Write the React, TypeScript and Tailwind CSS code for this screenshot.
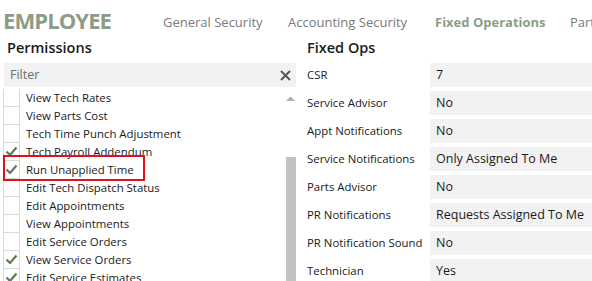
import React from "react";

const perms: { label: string; checked: boolean }[] = [
  { label: "View Tech Rates", checked: false },
  { label: "View Parts Cost", checked: false },
  { label: "Tech Time Punch Adjustment", checked: false },
  { label: "Tech Payroll Addendum", checked: true },
  { label: "Run Unapplied Time", checked: true },
  { label: "Edit Tech Dispatch Status", checked: false },
  { label: "Edit Appointments", checked: false },
  { label: "View Appointments", checked: false },
  { label: "Edit Service Orders", checked: false },
  { label: "View Service Orders", checked: true },
  { label: "Edit Service Estimates", checked: true },
];

const fixedOps: [string, string][] = [
  ["CSR", "7"],
  ["Service Advisor", "No"],
  ["Appt Notifications", "No"],
  ["Service Notifications", "Only Assigned To Me"],
  ["Parts Advisor", "No"],
  ["PR Notifications", "Requests Assigned To Me"],
  ["PR Notification Sound", "No"],
  ["Technician", "Yes"],
];

function Check() {
  return (
    <svg width="13" height="11" viewBox="0 0 13 11">
      <path d="M1.5 5.5 L5 9 L11.5 1.5" fill="none" stroke="#5d7a57" strokeWidth="2.2" />
    </svg>
  );
}

export default function App() {
  return (
    <div
      className="w-[592px] h-[281px] overflow-hidden bg-white text-[#1a1a1a]"
      style={{ fontFamily: "'Open Sans', 'Noto Sans', sans-serif" }}
    >
      {/* header tabs */}
      <div className="flex items-end h-[34px] pl-[3px] whitespace-nowrap">
        <div className="text-[22px] font-bold leading-none text-[#8c9c86] tracking-[-0.9px] pb-[3px]">EMPLOYEE</div>
        <div className="flex gap-[24px] ml-[52px] text-[13px] text-[#7a7a7a] pb-[2px]">
          <span className="w-[101px]">General Security</span>
          <span className="w-[123px]">Accounting Security</span>
          <span className="w-[111px] font-bold text-[#8c9c86]">Fixed Operations</span>
          <span>Parts</span>
        </div>
      </div>

      <div className="flex">
        {/* permissions */}
        <div className="w-[296px] shrink-0 pl-[4px]">
          <div className="h-[29px] pl-[3px] pt-[4px] text-[14.5px] font-semibold leading-[20px]">Permissions</div>
          <div className="flex items-center justify-between h-[24px] bg-[#f2f2f2] pl-[6px] pr-[5px] text-[12.5px] text-[#6e6e6e]">
            <span>Filter</span>
            <svg width="11" height="11" viewBox="0 0 11 11">
              <path d="M1 1 L10 10 M10 1 L1 10" stroke="#555" strokeWidth="2" />
            </svg>
          </div>
          <div className="relative flex h-[200px] mt-[1px] -ml-[1px]">
            <div className="flex-1 pt-[1px]">
              {perms.map((p) => (
                <div key={p.label} className="flex h-[18px] items-center">
                  <div className="w-[17px] h-[18px] border border-[#dadada] border-t-0 flex items-center justify-center">
                    {p.checked && <Check />}
                  </div>
                  <span className="ml-[6px] text-[11.4px] leading-none whitespace-nowrap">{p.label}</span>
                </div>
              ))}
            </div>
            <div className="w-[11px] flex flex-col items-center">
              <svg width="11" height="8" viewBox="0 0 11 8" className="mt-[7px]">
                <path d="M1 6 L5.5 1.5 L10 6 Z" fill="#b0b0b0" />
              </svg>
              <div className="w-[10px] flex-1 mt-[54px] bg-[#c1c1c1]" />
            </div>
            <div className="absolute left-0 top-[67px] w-[142px] h-[26px] border-[2.5px] border-[#e3101c]" />
          </div>
        </div>

        {/* fixed ops */}
        <div className="flex-1 pl-[11px]">
          <div className="h-[29px] pt-[4px] text-[14.5px] font-semibold leading-[20px]">Fixed Ops</div>
          <div className="flex flex-col gap-[4px]">
            {fixedOps.map(([k, v]) => (
              <div key={k} className="flex h-[24px] items-center">
                <div className="w-[123px] text-[11.4px] whitespace-nowrap">{k}</div>
                <div className="flex-1 h-full flex items-center bg-[#f2f2f2] pl-[6px] text-[12.5px] whitespace-nowrap">{v}</div>
              </div>
            ))}
          </div>
        </div>
      </div>
    </div>
  );
}
